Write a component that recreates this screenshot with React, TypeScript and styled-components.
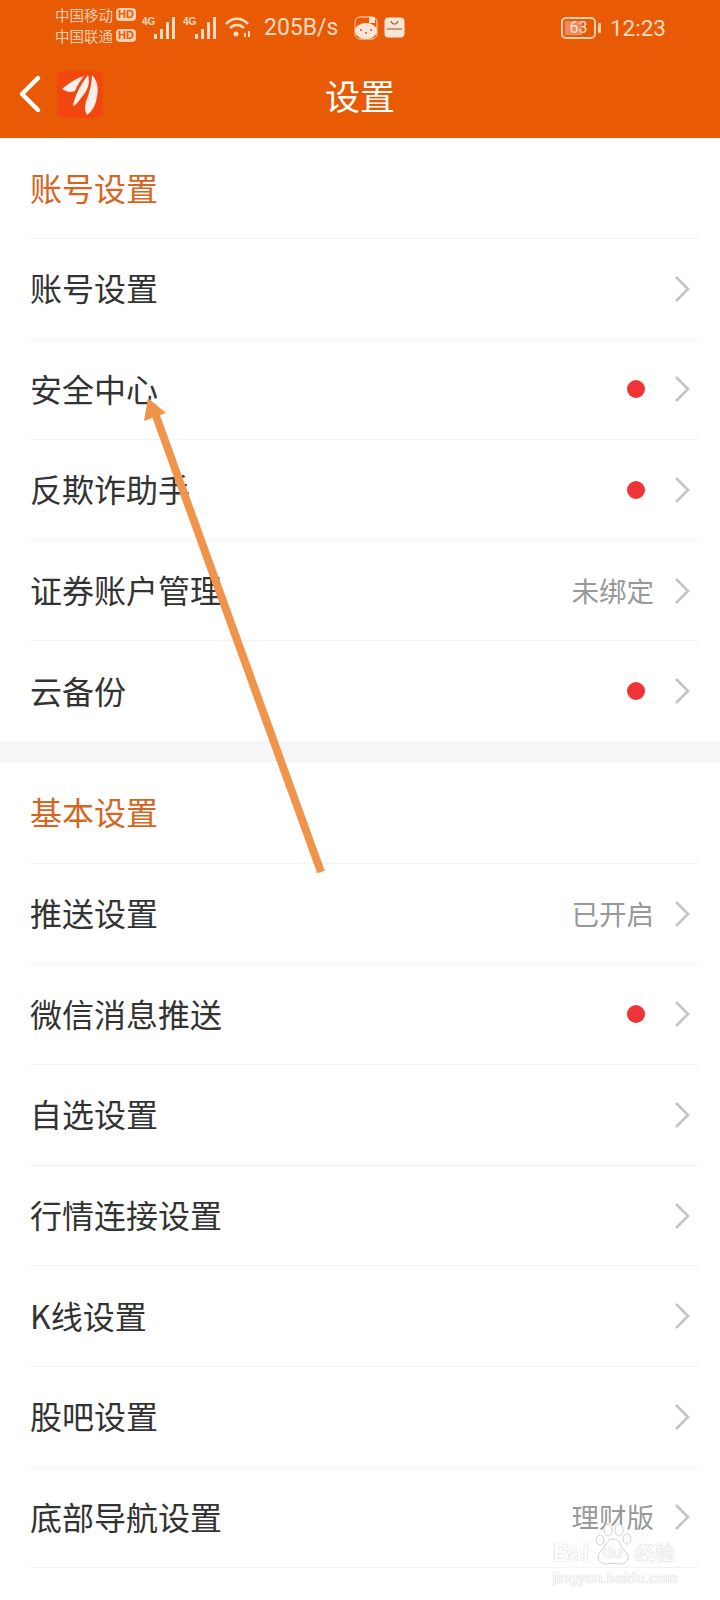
import React from "react";
import styled, { createGlobalStyle } from "styled-components";

const Global = createGlobalStyle`
  html, body { margin: 0; padding: 0; background: #fff; }
  body { font-family: "Noto Sans CJK SC", "Noto Sans", sans-serif; }
`;

const Page = styled.div`
  position: relative;
  width: 720px;
  height: 1600px;
  overflow: hidden;
  background: #fff;
`;

const Header = styled.header`
  height: 138px;
  background: #e95a04;
  display: flex;
  flex-direction: column;
`;

const StatusBar = styled.div`
  height: 50px;
  padding: 5px 0 0 55px;
  display: flex;
  align-items: center;
  color: #fbdcc4;
  box-sizing: border-box;
`;

const Carriers = styled.div`
  display: flex;
  flex-direction: column;
  gap: 2px;
  width: 87px;
  margin-top: -5px;
`;

const Carrier = styled.div`
  display: flex;
  align-items: center;
  gap: 3px;
  font-size: 14.5px;
  line-height: 19px;
  white-space: nowrap;
  opacity: 0.9;
`;

const HdBadge = styled.span`
  width: 20px;
  height: 13px;
  border-radius: 4px;
  background: #fbdcc4;
  color: #ea5a04;
  font: 700 11px/13px "Liberation Sans", sans-serif;
  text-align: center;
`;

const Signal = styled.svg`
  flex: none;
  margin-right: 8px;
`;

const Speed = styled.span`
  font: 400 23px/28px Roboto, sans-serif;
  margin-left: 6px;
  width: 90px;
`;

const AppIcon = styled.svg`
  flex: none;
  margin-right: 6px;
`;

const RightCluster = styled.div`
  margin-left: auto;
  padding-right: 54px;
  display: flex;
  align-items: center;
  gap: 10px;
`;

const Battery = styled.div`
  position: relative;
  display: flex;
  width: 35px;
  height: 22px;
  box-sizing: border-box;
  padding: 2px;
  border: 2px solid #f8cfae;
  border-radius: 5px;
  margin-right: 4px;
`;

const BatteryFill = styled.div`
  width: 63%;
  background: #f08a5c;
  border-radius: 1px;
`;

const BatteryLabel = styled.span`
  position: absolute;
  inset: 0;
  text-align: center;
  font: 400 16px/18px Roboto, sans-serif;
  color: #fbe3d2;
`;

const BatteryTip = styled.span`
  position: absolute;
  right: -7px;
  top: 4px;
  width: 3px;
  height: 10px;
  border-radius: 1px;
  background: #f8cfae;
`;

const Clock = styled.span`
  font: 400 22.5px/28px Roboto, sans-serif;
`;

const NavBar = styled.div`
  position: relative;
  flex: 1;
  display: flex;
  align-items: center;
  padding-left: 19px;
  gap: 16px;
`;

const NavTitle = styled.h1`
  position: absolute;
  left: 0;
  right: 0;
  top: 1px;
  margin: 0;
  text-align: center;
  font-size: 35px;
  line-height: 88px;
  font-weight: 400;
  color: #fff;
`;

const SectionHead = styled.div<{ $h: number }>`
  height: ${(p) => p.$h}px;
  box-sizing: border-box;
  padding: 0 0 3px 30px;
  display: flex;
  align-items: center;
  font-size: 32px;
  color: #d5651f;
`;

const Row = styled.div`
  height: 100.6px;
  box-sizing: border-box;
  margin-left: 30px;
  margin-right: 21px;
  padding-right: 9px;
  border-top: 1px solid #f3f3f4;
  display: flex;
  align-items: center;
  gap: 20px;
`;

const RowLabel = styled.span`
  flex: 1;
  font-size: 32px;
  color: #333;
  padding-bottom: 3px;
`;

const RowValue = styled.span`
  font-size: 27.5px;
  color: #999;
  padding-bottom: 2px;
`;

const Dot = styled.span`
  width: 18px;
  height: 18px;
  margin-right: 9px;
  border-radius: 50%;
  background: #ef3436;
`;

const Chevron = styled.svg`
  flex: none;
  display: block;
`;

const Gap = styled.div`
  height: 21px;
  background: #f5f6f7;
`;

const Arrow = styled.svg`
  position: absolute;
  left: 0;
  top: 0;
  pointer-events: none;
`;

const Watermark = styled.div`
  position: absolute;
  left: 553px;
  top: 1523px;
  width: 130px;
  color: #fff;
  text-shadow: 0 0 1px #c8c8c8, 0 0 1px #c8c8c8;
  white-space: nowrap;
`;

const WmTop = styled.div`
  display: flex;
  align-items: flex-end;
  height: 43px;
  font: 700 23px/26px "Liberation Sans", sans-serif;
`;

const WmPaw = styled.div`
  position: relative;
  width: 40px;
  height: 43px;
  margin: 0 2px 0 4px;
  display: flex;
  align-items: flex-end;
  justify-content: center;
  font: 400 17px/26px "Liberation Sans", sans-serif;
`;

const WmPawDraw = styled.svg`
  position: absolute;
  left: 0;
  top: 0;
`;

const WmPawText = styled.span`
  position: relative;
`;

const WmCn = styled.span`
  font: 400 20px/26px "Noto Sans CJK SC", sans-serif;
`;

const WmBottom = styled.div`
  font: 400 14.5px/17px "Liberation Sans", sans-serif;
  letter-spacing: 0.5px;
  margin-top: 4px;
`;

const Bars = () => (
  <Signal width="33" height="28" viewBox="0 0 33 28">
    <text x="0" y="11" fontSize="10" fontWeight="700" fontFamily="Liberation Sans" fill="#fbdcc4">4G</text>
    <rect x="12" y="20" width="3" height="5" fill="#fbdcc4" />
    <rect x="18" y="15" width="3" height="10" fill="#fbdcc4" />
    <rect x="24" y="8" width="3" height="17" fill="#fbdcc4" />
    <rect x="30" y="3" width="3" height="22" fill="#fbdcc4" />
  </Signal>
);

const Items: { label: string; value?: string; dot?: boolean }[] = [
  { label: "账号设置" },
  { label: "安全中心", dot: true },
  { label: "反欺诈助手", dot: true },
  { label: "证券账户管理", value: "未绑定" },
  { label: "云备份", dot: true },
];

const Items2: { label: string; value?: string; dot?: boolean }[] = [
  { label: "推送设置", value: "已开启" },
  { label: "微信消息推送", dot: true },
  { label: "自选设置" },
  { label: "行情连接设置" },
  { label: "K线设置" },
  { label: "股吧设置" },
  { label: "底部导航设置", value: "理财版" },
];

const SettingRow = ({ label, value, dot }: { label: string; value?: string; dot?: boolean }) => (
  <Row>
    <RowLabel>{label}</RowLabel>
    {value && <RowValue>{value}</RowValue>}
    {dot && <Dot />}
    <Chevron width="16" height="28" viewBox="0 0 16 28" fill="none">
      <path d="M2 2 L14 14 L2 26" stroke="#c4c4c4" strokeWidth="2.6" />
    </Chevron>
  </Row>
);

export default function App() {
  return (
    <Page>
      <Global />
      <Header>
        <StatusBar>
          <Carriers>
            <Carrier>中国移动<HdBadge>HD</HdBadge></Carrier>
            <Carrier>中国联通<HdBadge>HD</HdBadge></Carrier>
          </Carriers>
          <Bars />
          <Bars />
          <Signal width="26" height="24" viewBox="0 0 26 24" fill="none">
            <path d="M2 8 C8 1 18 1 24 8" stroke="#fbdcc4" strokeWidth="2.6" />
            <path d="M6 12 C10 8 16 8 20 12" stroke="#fbdcc4" strokeWidth="2.6" />
            <circle cx="12" cy="18" r="2.5" fill="#fbdcc4" />
            <rect x="20" y="17" width="2" height="4" fill="#fbdcc4" />
            <rect x="24" y="15" width="2" height="6" fill="#fbdcc4" />
          </Signal>
          <Speed>205B/s</Speed>
          <AppIcon width="24" height="24" viewBox="0 0 24 24">
            <rect x="1" y="1" width="22" height="22" rx="5" fill="#e95a04" stroke="#fbdcc4" />
            <ellipse cx="12" cy="15" rx="11" ry="8" fill="#fbe6d6" />
            <rect x="15" y="1" width="6" height="6" fill="#fbe6d6" />
            <circle cx="7" cy="14" r="1" fill="#a76a3c" />
            <circle cx="12" cy="17" r="1" fill="#a76a3c" />
            <circle cx="17" cy="14" r="1" fill="#a76a3c" />
          </AppIcon>
          <AppIcon width="21" height="21" viewBox="0 0 21 21" fill="none">
            <rect x="0.5" y="0.5" width="20" height="20" rx="4" fill="#fbe6d6" />
            <path d="M7 4 C8 8 13 8 14 4" stroke="#a76a3c" strokeWidth="1.2" />
            <rect x="3" y="11" width="15" height="2" fill="#c49a7c" />
          </AppIcon>
          <RightCluster>
            <Battery>
              <BatteryFill />
              <BatteryLabel>63</BatteryLabel>
              <BatteryTip />
            </Battery>
            <Clock>12:23</Clock>
          </RightCluster>
        </StatusBar>
        <NavBar>
          <svg width="22" height="38" viewBox="0 0 22 38" fill="none">
            <path d="M19 3 L3 19 L19 35" stroke="#fff" strokeWidth="4.4" strokeLinecap="round" strokeLinejoin="round" />
          </svg>
          <svg width="46" height="47" viewBox="0 0 46 47">
            <rect width="46" height="47" rx="7" fill="#f2470f" />
            <path d="M5 18 C12 12 20 7 27 5 C24 9 20 14 18 20 C14 22 10 21 5 18 Z" fill="#fdeee7" />
            <path d="M16 35 C17 27 23 14 31 4 C34 11 30 21 24 27 C21 31 19 34 16 35 Z" fill="#fdeee7" />
            <path d="M30 44 C27 39 28 33 30 28 C33 20 35 11 35 4 C40 9 42 17 40 25 C39 33 36 40 30 44 Z" fill="#fdeee7" />
          </svg>
          <NavTitle>设置</NavTitle>
        </NavBar>
      </Header>
      <SectionHead $h={100}>账号设置</SectionHead>
      {Items.map((i) => <SettingRow key={i.label} {...i} />)}
      <Gap />
      <SectionHead $h={101}>基本设置</SectionHead>
      {Items2.map((i) => <SettingRow key={i.label} {...i} />)}
      <Row />
      <Arrow width="720" height="1600" viewBox="0 0 720 1600">
        <path d="M321 872 L156 416" stroke="#f0944c" strokeWidth="8" />
        <path d="M148 398 L166 413 L144 421 Z" fill="#f0944c" />
      </Arrow>
      <Watermark>
        <WmTop>
          Bai
          <WmPaw>
            <WmPawDraw width="40" height="43" viewBox="0 0 40 43" fill="#fff" stroke="#d0d0d0">
              <ellipse cx="7" cy="17" rx="4" ry="5" />
              <ellipse cx="15" cy="7" rx="4" ry="6" />
              <ellipse cx="26" cy="7" rx="4" ry="6" />
              <ellipse cx="34" cy="16" rx="4" ry="5" />
              <path d="M20 16 C13 16 13 24 7 29 C2 35 8 42 14 41 C18 40 22 40 27 41 C34 42 38 34 33 29 C27 24 27 16 20 16 Z" />
            </WmPawDraw>
            <WmPawText>du</WmPawText>
          </WmPaw>
          <WmCn>经验</WmCn>
        </WmTop>
        <WmBottom>jingyan.baidu.com</WmBottom>
      </Watermark>
    </Page>
  );
}
